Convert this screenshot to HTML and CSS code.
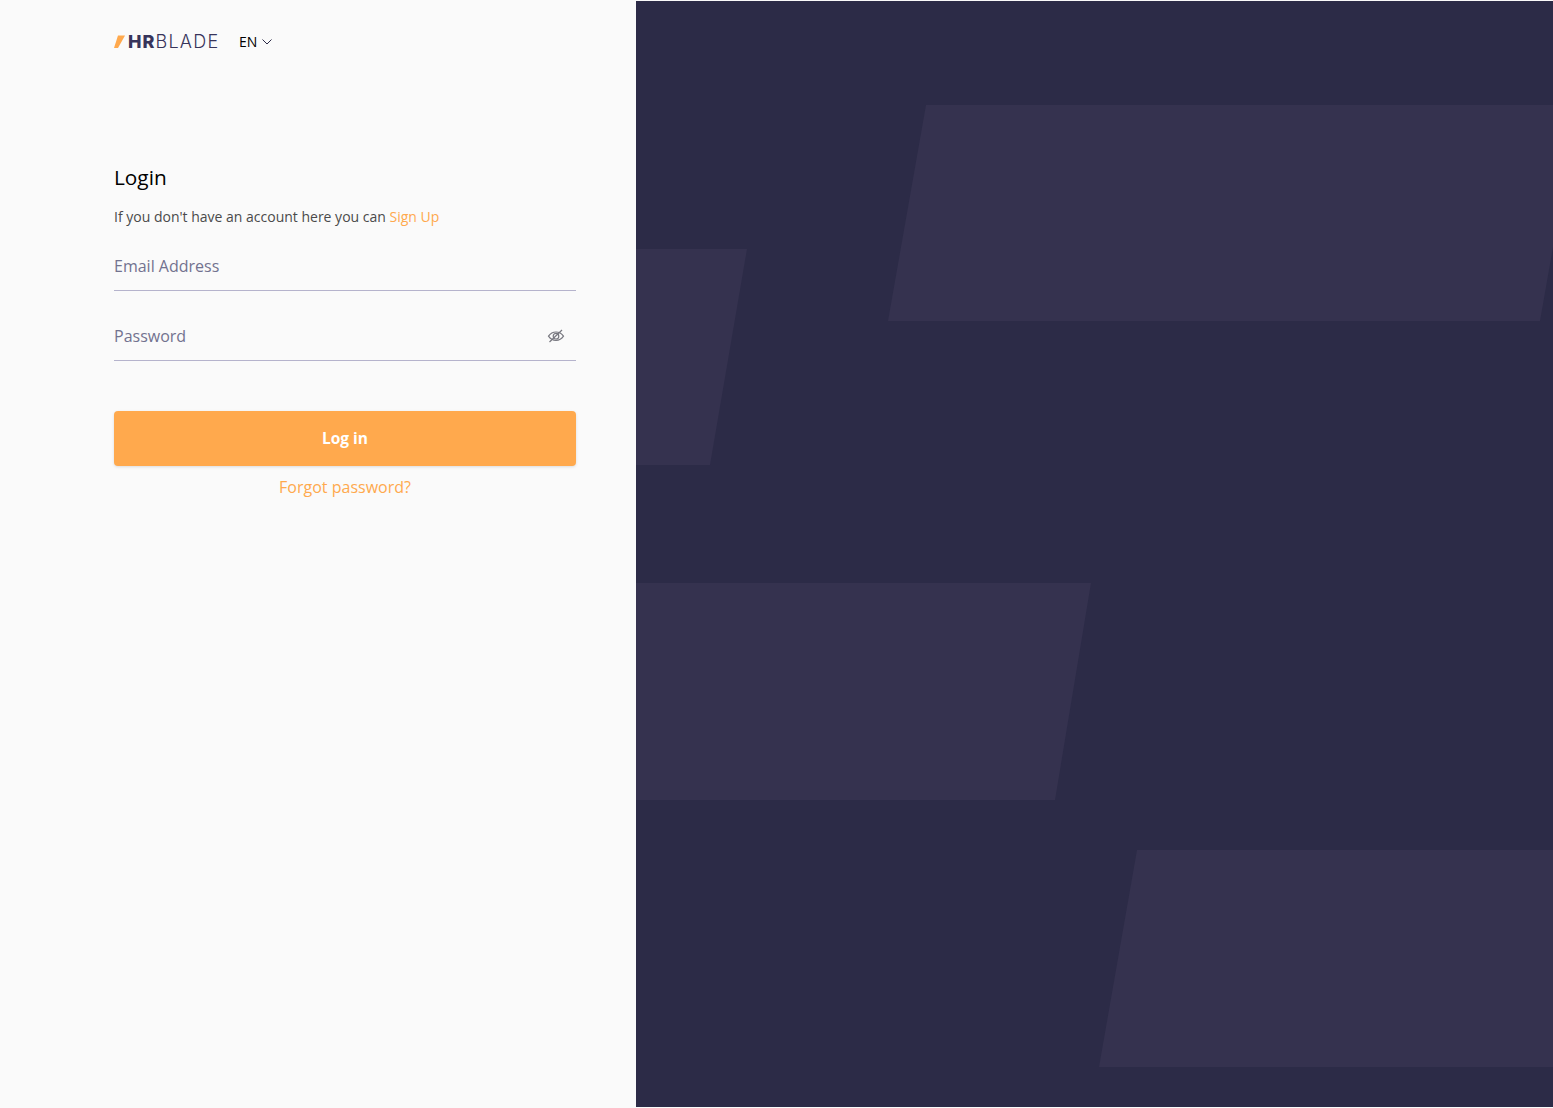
FILE: index.html
```html
<!DOCTYPE html>
<html>
<head>
    <meta charset="utf-8">
    <title>HRBlade - Login</title>
    <link rel="stylesheet" href="styles.css">
</head>
<body>
    <div class="page">
        <div class="left-side">
            <div class="top-bar">
                <a class="logo" href="#">
                    <svg class="logo-mark" width="11" height="14" viewBox="0 0 11 14"><polygon points="4,0.500 11,0.500 4,13 0,13" fill="#ffa94d"/></svg>
                    <span class="logo-hr">HR</span><span class="logo-blade">BLADE</span>
                </a>
                <div class="lang">
                    EN
                    <svg width="10" height="6" viewBox="0 0 10 6"><path d="M0.500 0.500L5 5l4.500-4.500" fill="none" stroke="#2c2b47" stroke-width="1"/></svg>
                </div>
            </div>

            <form class="login-form">
                <h1>Login</h1>
                <p class="signup-text">If you don't have an account here you can <a href="#">Sign Up</a></p>

                <div class="field">
                    <input type="text" placeholder="Email Address">
                </div>
                <div class="field field-password">
                    <input type="password" placeholder="Password">
                    <svg class="eye" width="18" height="18" viewBox="0 0 18 18" fill="none" stroke="#77777f" stroke-width="1.2">
                        <path d="M1.500 9.200C3.400 6.400 5.900 5 9 5s5.600 1.400 7.500 4.200C14.600 12 12.100 13.400 9 13.400S3.400 12 1.500 9.200z"/>
                        <circle cx="9" cy="9.200" r="2.800"/>
                        <path d="M15 3L2.500 15"/>
                    </svg>
                </div>

                <button type="button" class="login-btn">Log in</button>
                <a class="forgot" href="#">Forgot password?</a>
            </form>
        </div>

        <div class="right-side">
            <svg class="shapes" viewBox="636 1 917 1106" width="917" height="1106">
                <polygon points="926,105 1578,105 1540,321 888,321"/>
                <polygon points="636,249 747,249 710,465 636,465"/>
                <polygon points="636,583 1091,583 1055,800 636,800"/>
                <polygon points="1137,850 1553,850 1553,1067 1099,1067"/>
            </svg>
        </div>
    </div>
</body>
</html>
```

FILE: styles.css
```css
* {
    box-sizing: border-box;
}
html, body {
    height: 100%;
}
body {
    margin: 0;
    background-color: #fafafa;
    font-family: "Open Sans", Arial, sans-serif;
    overflow: hidden;
}
a {
    text-decoration: none;
}
.page {
    display: flex;
    height: 1108px;
}

/* left column */
.left-side {
    width: 636px;
    flex-shrink: 0;
    padding: 0 60px 0 114px;
}
.top-bar {
    display: flex;
    align-items: center;
    height: 83px;
}
.logo {
    display: flex;
    align-items: center;
    width: 105px;
    font-family: Inter, Arial, sans-serif;
    font-size: 18px;
    line-height: 20px;
    color: #37345a;
}
.logo-mark {
    flex-shrink: 0;
    margin-right: 3px;
}
.logo-hr {
    font-weight: 800;
    letter-spacing: 1px;
}
.logo-blade {
    font-weight: 300;
    letter-spacing: 1.300px;
}
.lang {
    display: flex;
    align-items: center;
    gap: 5px;
    margin-left: 20px;
    font-size: 14px;
    color: #000;
}

.login-form {
    display: flex;
    flex-direction: column;
    padding-top: 79px;
}
h1 {
    margin: 0;
    font-size: 20.800px;
    font-weight: 400;
    line-height: 30px;
    color: #000;
}
.signup-text {
    margin: 15px 0 0;
    font-size: 14px;
    line-height: 20px;
    color: #4a4a4a;
}
.signup-text a {
    color: #ffa94d;
}
.field {
    position: relative;
    height: 54px;
    margin-top: 10px;
    border-bottom: 1px solid #b5b3cc;
}
.field-password {
    margin-top: 16px;
}
.field input {
    width: 100%;
    height: 100%;
    padding: 4px 0 0;
    border: none;
    outline: none;
    background: transparent;
    font-family: inherit;
    font-size: 16px;
    color: #72728f;
}
.field input::placeholder {
    color: #72728f;
    opacity: 1;
}
.eye {
    position: absolute;
    right: 11px;
    top: 20px;
}
.login-btn {
    height: 55px;
    margin-top: 50px;
    padding: 0 0 2px;
    border: none;
    border-radius: 4px;
    background-color: #ffa94d;
    box-shadow: 0 1px 3px rgba(0, 0, 0, 0.12);
    color: #fff;
    font-family: inherit;
    font-size: 15.500px;
    font-weight: 700;
    cursor: pointer;
}
.forgot {
    margin-top: 10px;
    text-align: center;
    font-size: 16px;
    line-height: 22px;
    color: #ffa94d;
}

/* right column */
.right-side {
    flex: 1;
    height: 1106px;
    margin-top: 1px;
    background-color: #2c2b47;
    overflow: hidden;
}
.shapes {
    display: block;
}
.shapes polygon {
    fill: #35324f;
}
```
